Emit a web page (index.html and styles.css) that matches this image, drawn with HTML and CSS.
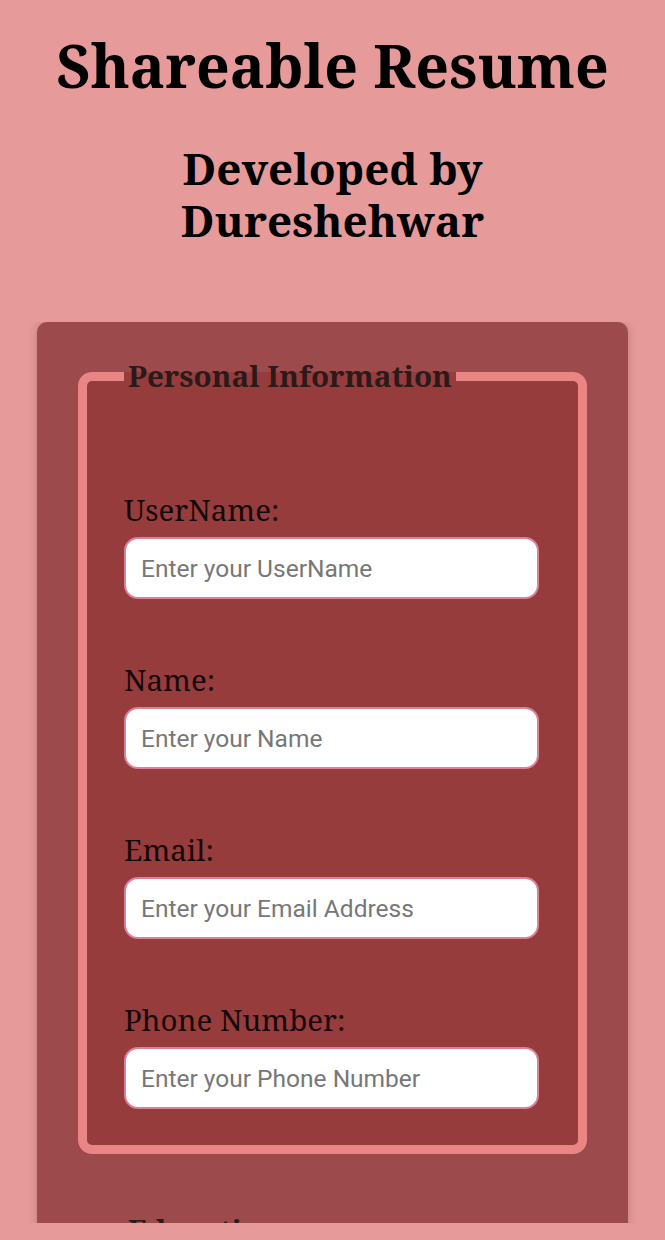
FILE: index.html
```html
<!DOCTYPE html>
<html lang="en">
<head>
<meta charset="utf-8">
<title>Shareable Resume</title>
<link rel="stylesheet" href="styles.css">
</head>
<body>
<div class="page">
  <header class="header">
    <h1 class="title">Shareable Resume</h1>
    <h2 class="subtitle">Developed by Dureshehwar</h2>
  </header>
  <div class="viewport">
    <form class="card">
      <fieldset class="section">
        <legend class="legend">Personal Information</legend>
        <div class="group">
          <label class="label" for="username">UserName:</label>
          <input class="input" id="username" type="text" placeholder="Enter your UserName">
        </div>
        <div class="group">
          <label class="label" for="name">Name:</label>
          <input class="input" id="name" type="text" placeholder="Enter your Name">
        </div>
        <div class="group">
          <label class="label" for="email">Email:</label>
          <input class="input" id="email" type="email" placeholder="Enter your Email Address">
        </div>
        <div class="group">
          <label class="label" for="phone">Phone Number:</label>
          <input class="input" id="phone" type="tel" placeholder="Enter your Phone Number">
        </div>
      </fieldset>
      <fieldset class="section">
        <legend class="legend">Education</legend>
        <div class="group">
          <label class="label" for="degree">Degree:</label>
          <input class="input" id="degree" type="text" placeholder="Enter your Degree">
        </div>
      </fieldset>
    </form>
  </div>
</div>
</body>
</html>
```

FILE: styles.css
```css
* { box-sizing: border-box; }

html, body {
  margin: 0;
  padding: 0;
  background: #e69a9a;
}

body {
  font-family: "Noto Serif", "DejaVu Serif", serif;
  color: #000;
}

.page {
  height: 1240px;
  display: flex;
  flex-direction: column;
  padding-bottom: 17px;
  overflow: hidden;
}

.header {
  text-align: center;
}

.title {
  margin: 25px 0 0;
  font-size: 59px;
  line-height: 80px;
  font-weight: 700;
}

.subtitle {
  margin: 37px auto 0;
  width: 340px;
  font-size: 44px;
  line-height: 52px;
  font-weight: 700;
}

.viewport {
  flex: 1;
  min-height: 0;
  overflow: hidden;
  margin-top: 76px;
}

.card {
  margin: 0 37px;
  padding: 34px 41px 40px;
  background: #9c4a4c;
  border-radius: 10px;
  box-shadow: 0 0 8px rgba(90, 30, 30, 0.25);
  display: flex;
  flex-direction: column;
  gap: 56px;
}

.section {
  margin: 0;
  border: 9px solid #ea8585;
  border-radius: 14px;
  background: #963c3d;
  padding: 97px 39px 36px 37px;
  display: flex;
  flex-direction: column;
  gap: 64px;
  min-width: 0;
}

.legend {
  padding: 0 4px;
  font-size: 29.6px;
  line-height: 40px;
  font-weight: 700;
  color: #2a1a1a;
}

.group {
  display: flex;
  flex-direction: column;
}

.label {
  font-size: 29.5px;
  line-height: 34px;
  color: #150808;
  margin-bottom: 10px;
}

.input {
  height: 62px;
  width: 100%;
  border: 2px solid #d9829a;
  border-radius: 14px;
  background: #fff;
  padding: 0 15px;
  font-family: Roboto, "Noto Sans", sans-serif;
  font-size: 24.5px;
  color: #222;
  outline: none;
}

.input::placeholder {
  color: #777;
}
```
